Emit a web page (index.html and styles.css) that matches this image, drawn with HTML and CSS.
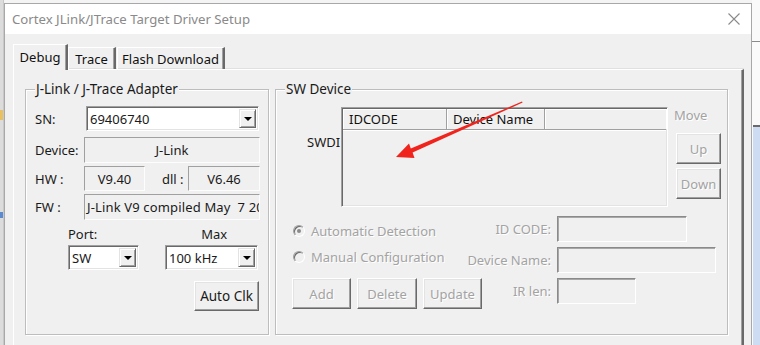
FILE: index.html
```html
<!DOCTYPE html>
<html>
<head>
<meta charset="utf-8">
<title>Cortex JLink/JTrace Target Driver Setup</title>
<link rel="stylesheet" href="styles.css">
</head>
<body>
<div class="desk">
  <div class="bg-left">
    <span class="bl-mark bl-orange"></span>
    <span class="bl-mark bl-blue"></span>
  </div>
  <div class="win">
    <div class="titlebar">
      <span class="title">Cortex JLink/JTrace Target Driver Setup</span>
      <svg class="close" width="12" height="12" viewBox="0 0 12 12"><path d="M0.5 0.5 L11.5 11.5 M11.5 0.5 L0.5 11.5" stroke="#8a8a8a" stroke-width="1.1" fill="none"/></svg>
    </div>
    <div class="client">
      <div class="tabs">
        <div class="tab sel">Debug</div>
        <div class="tab t2">Trace</div>
        <div class="tab t3">Flash Download</div>
      </div>
      <div class="panel">
        <div class="group g-left">
          <span class="legend">J-Link / J-Trace Adapter</span>
          <div class="row r-sn">
            <span class="lbl w-sn">SN:</span>
            <div class="combo c-sn"><span class="cval">69406740</span><span class="cbtn"><i class="tri"></i></span></div>
          </div>
          <div class="row r-dev">
            <span class="lbl w-lab">Device:</span>
            <div class="sunk s-wide">J-Link</div>
          </div>
          <div class="row r-hw">
            <span class="lbl w-lab">HW :</span>
            <div class="sunk s-hw">V9.40</div>
            <span class="lbl dll">dll :</span>
            <div class="sunk s-dll">V6.46</div>
          </div>
          <div class="row r-fw">
            <span class="lbl w-lab">FW :</span>
            <div class="sunk s-wide s-left">J-Link V9 compiled May  7 2019 14:12:47</div>
          </div>
          <div class="row r-pmlab">
            <span class="lbl l-port">Port:</span>
            <span class="lbl l-max">Max</span>
          </div>
          <div class="row r-pm">
            <div class="combo c-port"><span class="cval">SW</span><span class="cbtn"><i class="tri"></i></span></div>
            <div class="combo c-max"><span class="cval">100 kHz</span><span class="cbtn"><i class="tri"></i></span></div>
          </div>
          <div class="row r-auto">
            <div class="btn b-auto">Auto Clk</div>
          </div>
        </div>
        <div class="group g-right">
          <span class="legend">SW Device</span>
          <div class="top">
            <span class="lbl swdi">SWDI</span>
            <div class="list">
              <div class="lhead">
                <span class="hcell h1">IDCODE</span>
                <span class="hcell h2">Device Name</span>
                <span class="hcell h3"></span>
              </div>
            </div>
            <div class="movecol">
              <span class="lbl dis">Move</span>
              <div class="btn dis b-up">Up</div>
              <div class="btn dis b-down">Down</div>
            </div>
          </div>
          <div class="frow f1">
            <div class="radio-item"><span class="radio on"></span><span class="dis">Automatic Detection</span></div>
            <div class="field"><span class="dis flabel">ID CODE:</span><div class="fwrap"><div class="dbox w-id"></div></div></div>
          </div>
          <div class="frow f2">
            <div class="radio-item"><span class="radio"></span><span class="dis">Manual Configuration</span></div>
            <div class="field"><span class="dis flabel">Device Name:</span><div class="fwrap"><div class="dbox w-dn"></div></div></div>
          </div>
          <div class="frow f3">
            <div class="btnrow">
              <div class="btn dis b-sm">Add</div>
              <div class="btn dis b-sm">Delete</div>
              <div class="btn dis b-sm">Update</div>
            </div>
            <div class="field"><span class="dis flabel">IR len:</span><div class="fwrap"><div class="dbox w-ir"></div></div></div>
          </div>
        </div>
      </div>
    </div>
  </div>
  <div class="bg-right">
    <span class="br-line"></span>
    <span class="br-blue"></span>
  </div>
</div>
<svg class="arrow" width="760" height="345" viewBox="0 0 760 345">
  <polygon points="396,157 409,143.5 410.8,148.6 522,101.6 522.6,102.6 412.6,152.6 414.5,158" fill="#f0241c"/>
</svg>
</body>
</html>
```

FILE: styles.css
```css
* { box-sizing: border-box; }
html, body { margin: 0; padding: 0; }
body {
  width: 760px;
  height: 345px;
  overflow: hidden;
  background: #f4f4f4;
  font-family: "Noto Sans", "Open Sans", sans-serif;
  font-size: 13px;
  color: #1a1a1a;
  position: relative;
}
.desk { display: flex; height: 345px; overflow: hidden; }

.bg-left {
  width: 4px;
  flex-shrink: 0;
  background: #dcdcdc;
  position: relative;
  border-right: 1px solid #c8c8c8;
}
.bl-mark { position: absolute; left: 0; width: 3px; }
.bl-orange { top: 110px; height: 10px; background: #e8c060; }
.bl-blue { top: 212px; height: 6px; background: #5a8ad0; }

.win {
  width: 748px;
  flex-shrink: 0;
  margin-top: 3px;
  border: 1px solid #a8a8a8;
  border-bottom: 0;
  display: flex;
  flex-direction: column;
  background: #f0f0f0;
  overflow: hidden;
}
.titlebar {
  height: 30px;
  flex-shrink: 0;
  background: #fff;
  display: flex;
  align-items: center;
  padding-left: 7px;
  padding-right: 11px;
}
.title {
  flex: 1;
  font-size: 13.2px;
  color: #8a8a8a;
  white-space: nowrap;
}
.close { display: block; }

.client { flex: 1; min-height: 0; padding: 10px 0 0 8px; overflow: hidden; }

.tabs { display: flex; align-items: flex-end; height: 25px; }
.tab {
  height: 22px;
  display: flex;
  align-items: center;
  justify-content: center;
  white-space: nowrap;
  border-top: 1px solid #fff;
  border-left: 1px solid #fff;
  border-right: 2px solid #696969;
  box-shadow: inset -1px 0 0 #a0a0a0;
  font-size: 13px;
  color: #111;
}
.tab.sel {
  width: 55px;
  position: relative;
  z-index: 1;
  margin-bottom: -1px;
  background: #f0f0f0;
  height: 26px;
  align-items: flex-start;
  padding-top: 3px;
}
.t2 { width: 48px; }
.t3 { width: 108px; margin-left: 1px; }

.panel {
  width: 731px;
  height: 280px;
  border-top: 1px solid #fff;
  border-left: 1px solid #fff;
  border-right: 2px solid #696969;
  box-shadow: inset -1px 0 0 #a0a0a0, 0 -1px 0 #e0e0e0;
  display: flex;
  align-items: flex-start;
  gap: 6px;
  padding: 19px 0 0 11px;
}

.group {
  position: relative;
  flex-shrink: 0;
  border: 1px solid #bdbdbd;
  box-shadow: inset 1px 1px 0 #fff, 1px 1px 0 #fff;
  height: 246px;
}
.g-left { width: 244px; padding: 16px 0 0 9px; }
.g-right { width: 453px; }
.legend {
  position: absolute;
  top: -10px;
  left: 9px;
  padding: 0 1px;
  background: #f0f0f0;
  line-height: 18px;
  font-size: 13.5px;
  white-space: nowrap;
}

.row { display: flex; align-items: center; }
.lbl { line-height: 16px; white-space: nowrap; }
.r-sn { height: 25px; }
.w-sn { width: 51px; }
.w-lab { width: 49px; }
.r-dev { height: 26px; margin-top: 6px; }
.r-hw { height: 25px; margin-top: 3px; }
.r-fw { height: 26px; margin-top: 3px; }
.r-pmlab { height: 16px; margin-top: 6px; }
.r-pm { height: 25px; margin-top: 3px; }
.r-auto { margin-top: 11px; }

.sunk {
  height: 100%;
  border: 1px solid;
  border-color: #a0a0a0 #fdfdfd #fdfdfd #a0a0a0;
  display: flex;
  align-items: center;
  justify-content: center;
  white-space: pre;
  overflow: hidden;
}
.s-wide { width: 176px; }
.s-left { justify-content: flex-start; padding-left: 2px; letter-spacing: 0.15px; }
.s-hw { width: 61px; }
.s-dll { width: 72px; }
.dll { width: 26px; margin-left: 17px; }

.l-port { margin-left: 33px; }
.l-max { margin-left: 104px; }

.combo {
  height: 100%;
  display: flex;
  background: #fff;
  border: 1px solid;
  border-color: #a0a0a0 #fff #fff #a0a0a0;
  box-shadow: inset 1px 1px 0 #696969, inset -1px -1px 0 #e3e3e3;
  padding: 2px;
}
.cval { flex: 1; display: flex; align-items: center; padding-left: 1px; }
.cbtn {
  width: 17px;
  background: #f0f0f0;
  border: 1px solid;
  border-color: #e3e3e3 #696969 #696969 #e3e3e3;
  box-shadow: inset 1px 1px 0 #fff, inset -1px -1px 0 #a0a0a0;
  display: flex;
  align-items: center;
  justify-content: center;
}
.tri {
  display: block;
  width: 0; height: 0;
  border-left: 4px solid transparent;
  border-right: 4px solid transparent;
  border-top: 4px solid #000;
}
.c-sn { width: 173px; }
.c-port { width: 71px; margin-left: 33px; }
.c-max { width: 93px; margin-left: 26px; }

.btn {
  display: flex;
  align-items: center;
  justify-content: center;
  background: #f0f0f0;
  border: 1px solid;
  border-color: #fff #696969 #696969 #fff;
  box-shadow: inset -1px -1px 0 #a0a0a0, inset 1px 1px 0 #e3e3e3;
  white-space: nowrap;
}
.b-auto { width: 65px; height: 30px; margin-left: 159px; font-size: 13.5px; }

.dis { color: #a3a3a3; text-shadow: 1px 1px 0 #fff; }

.top { display: flex; padding: 17px 0 0 31px; height: 117px; }
.swdi { width: 34px; margin-top: 27px; }
.list {
  width: 327px;
  height: 100px;
  border: 1px solid;
  border-color: #a0a0a0 #fff #fff #a0a0a0;
  box-shadow: inset 1px 1px 0 #696969, inset -1px -1px 0 #e3e3e3;
  padding: 1px 1px 0 1px;
}
.lhead {
  display: flex;
  height: 21px;
  border-bottom: 1px solid #a0a0a0;
  box-shadow: 0 1px 0 #fff;
}
.hcell {
  display: flex;
  align-items: center;
  padding-left: 6px;
  border-right: 1px solid #a0a0a0;
  box-shadow: 1px 0 0 #fff, inset 1px 1px 0 #fff;
  color: #111;
  white-space: nowrap;
}
.h1 { width: 104px; }
.h2 { width: 98px; }
.h3 { flex: 1; border-right: 0; }

.movecol { display: flex; flex-direction: column; margin-left: 6px; }
.b-up, .b-down { width: 45px; height: 31px; margin-left: 2px; }
.b-up { margin-top: 10px; }
.b-down { margin-top: 4px; }

.frow {
  display: flex;
  align-items: flex-start;
  padding: 0 11px 0 16px;
}
.f1 { margin-top: 9px; height: 26px; }
.f2 { margin-top: 5px; height: 26px; }
.f3 { margin-top: 5px; height: 31px; }
.radio-item {
  display: flex;
  align-items: center;
  height: 18px;
  margin-top: 6px;
  white-space: nowrap;
}
.f2 .radio-item { margin-top: 1px; }
.radio {
  width: 12px;
  height: 12px;
  border-radius: 50%;
  border: 1px solid;
  border-color: #a0a0a0 #fff #fff #a0a0a0;
  box-shadow: inset 1px 1px 0 #696969;
  margin: 0 6px 0 1px;
  display: flex;
  align-items: center;
  justify-content: center;
}
.radio.on::after {
  content: "";
  width: 4px;
  height: 4px;
  border-radius: 50%;
  background: #8a8a8a;
}
.field { margin-left: auto; display: flex; align-items: center; height: 26px; }
.flabel { margin-right: 6px; white-space: nowrap; }
.fwrap { width: 159px; height: 26px; }
.dbox {
  height: 26px;
  border: 1px solid;
  border-color: #8a8a8a #fff #fff #8a8a8a;
  box-shadow: inset 1px 1px 0 #a8a8a8;
}
.w-id { width: 130px; }
.w-dn { width: 159px; }
.w-ir { width: 79px; }

.btnrow { display: flex; gap: 6px; }
.b-sm { width: 59px; height: 31px; }
.btnrow .b-sm:nth-child(2) { width: 60px; }

.bg-right {
  width: 8px;
  flex-shrink: 0;
  position: relative;
  background: #fafafa;
}
.br-line { position: absolute; left: 0; right: 0; top: 41px; height: 1px; background: #8a8a8a; }
.br-blue { position: absolute; left: 1px; right: 0; top: 125px; bottom: 0; background: #cddcf3; border-top: 2px solid #6a6a6a; }

.arrow { position: absolute; left: 0; top: 0; pointer-events: none; }
```
